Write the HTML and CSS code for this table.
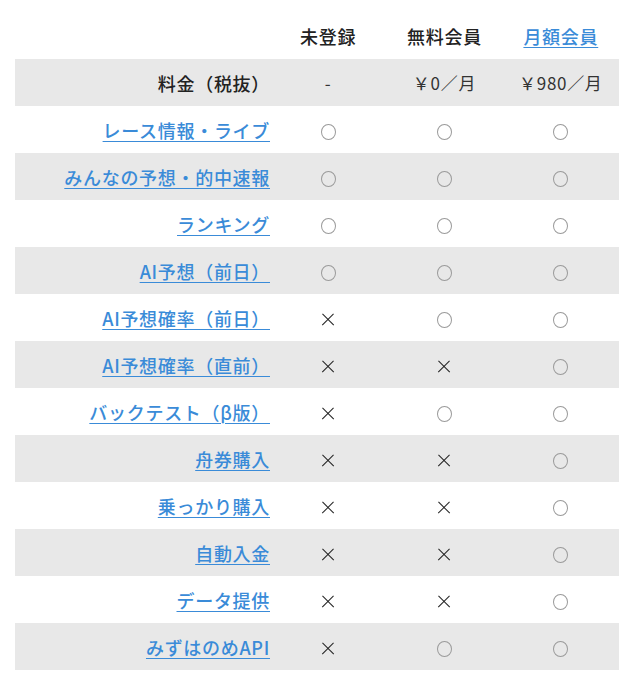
FILE: index.html
```html
<!DOCTYPE html>
<html lang="ja">
<head>
<meta charset="utf-8">
<link rel="stylesheet" href="styles.css">
</head>
<body>
<div class="wrap">
<table class="plan">
  <colgroup>
    <col class="c-label"><col class="c-plan"><col class="c-plan"><col class="c-plan">
  </colgroup>
  <thead>
    <tr class="head">
      <th></th>
      <th>未登録</th>
      <th>無料会員</th>
      <th><a href="#">月額会員</a></th>
    </tr>
  </thead>
  <tbody>
    <tr class="alt">
      <th class="label">料金（税抜）</th>
      <td class="price">-</td>
      <td class="price">￥0／月</td>
      <td class="price">￥980／月</td>
    </tr>
    <tr><th class="label"><a href="#">レース情報・ライブ</a></th><td><i class="ok"></i></td><td><i class="ok"></i></td><td><i class="ok"></i></td></tr>
    <tr class="alt"><th class="label"><a href="#">みんなの予想・的中速報</a></th><td><i class="ok"></i></td><td><i class="ok"></i></td><td><i class="ok"></i></td></tr>
    <tr><th class="label"><a href="#">ランキング</a></th><td><i class="ok"></i></td><td><i class="ok"></i></td><td><i class="ok"></i></td></tr>
    <tr class="alt"><th class="label"><a href="#">AI予想（前日）</a></th><td><i class="ok"></i></td><td><i class="ok"></i></td><td><i class="ok"></i></td></tr>
    <tr><th class="label"><a href="#">AI予想確率（前日）</a></th><td><i class="ng"></i></td><td><i class="ok"></i></td><td><i class="ok"></i></td></tr>
    <tr class="alt"><th class="label"><a href="#">AI予想確率（直前）</a></th><td><i class="ng"></i></td><td><i class="ng"></i></td><td><i class="ok"></i></td></tr>
    <tr><th class="label"><a href="#">バックテスト（β版）</a></th><td><i class="ng"></i></td><td><i class="ok"></i></td><td><i class="ok"></i></td></tr>
    <tr class="alt"><th class="label"><a href="#">舟券購入</a></th><td><i class="ng"></i></td><td><i class="ng"></i></td><td><i class="ok"></i></td></tr>
    <tr><th class="label"><a href="#">乗っかり購入</a></th><td><i class="ng"></i></td><td><i class="ng"></i></td><td><i class="ok"></i></td></tr>
    <tr class="alt"><th class="label"><a href="#">自動入金</a></th><td><i class="ng"></i></td><td><i class="ng"></i></td><td><i class="ok"></i></td></tr>
    <tr><th class="label"><a href="#">データ提供</a></th><td><i class="ng"></i></td><td><i class="ng"></i></td><td><i class="ok"></i></td></tr>
    <tr class="alt"><th class="label"><a href="#">みずはのめAPI</a></th><td><i class="ng"></i></td><td><i class="ok"></i></td><td><i class="ok"></i></td></tr>
  </tbody>
</table>
</div>
</body>
</html>
```

FILE: styles.css
```css
html, body {
  margin: 0;
  padding: 0;
  background: #ffffff;
}
body {
  font-family: "Noto Sans CJK JP", "Noto Sans", sans-serif;
  color: #222222;
}
.wrap {
  padding: 12px 21px 0 15px;
}
.plan {
  width: 604px;
  border-collapse: collapse;
  table-layout: fixed;
}
.c-label { width: 255px; }
.c-plan { width: 116.33px; }
.plan th, .plan td {
  height: 47px;
  padding: 0;
  font-size: 18px;
  letter-spacing: 0.7px;
  line-height: 1;
  vertical-align: middle;
  text-align: center;
}
.head th {
  font-weight: 500;
  color: #222;
}
.plan th.label {
  text-align: right;
  font-weight: 500;
  padding-right: 0;
  color: #222;
}
.plan td.price {
  font-weight: 400;
  font-size: 17px;
  color: #333;
}
.alt {
  background: #e8e8e8;
}
a {
  color: #3a8bd8;
  text-decoration: underline;
  text-underline-offset: 3px;
  text-decoration-thickness: 1px;
}
i {
  display: inline-block;
  vertical-align: middle;
  position: relative;
}
.ok {
  width: 15px;
  height: 16px;
  border: 1.2px solid #9a9a9a;
  border-radius: 50%;
  box-sizing: border-box;
}
.ng {
  width: 14px;
  height: 14px;
}
.ng::before, .ng::after {
  content: "";
  position: absolute;
  left: -1px;
  top: 6.4px;
  width: 16px;
  height: 1.3px;
  background: #222;
}
.ng::before { transform: rotate(45deg); }
.ng::after { transform: rotate(-45deg); }
```
